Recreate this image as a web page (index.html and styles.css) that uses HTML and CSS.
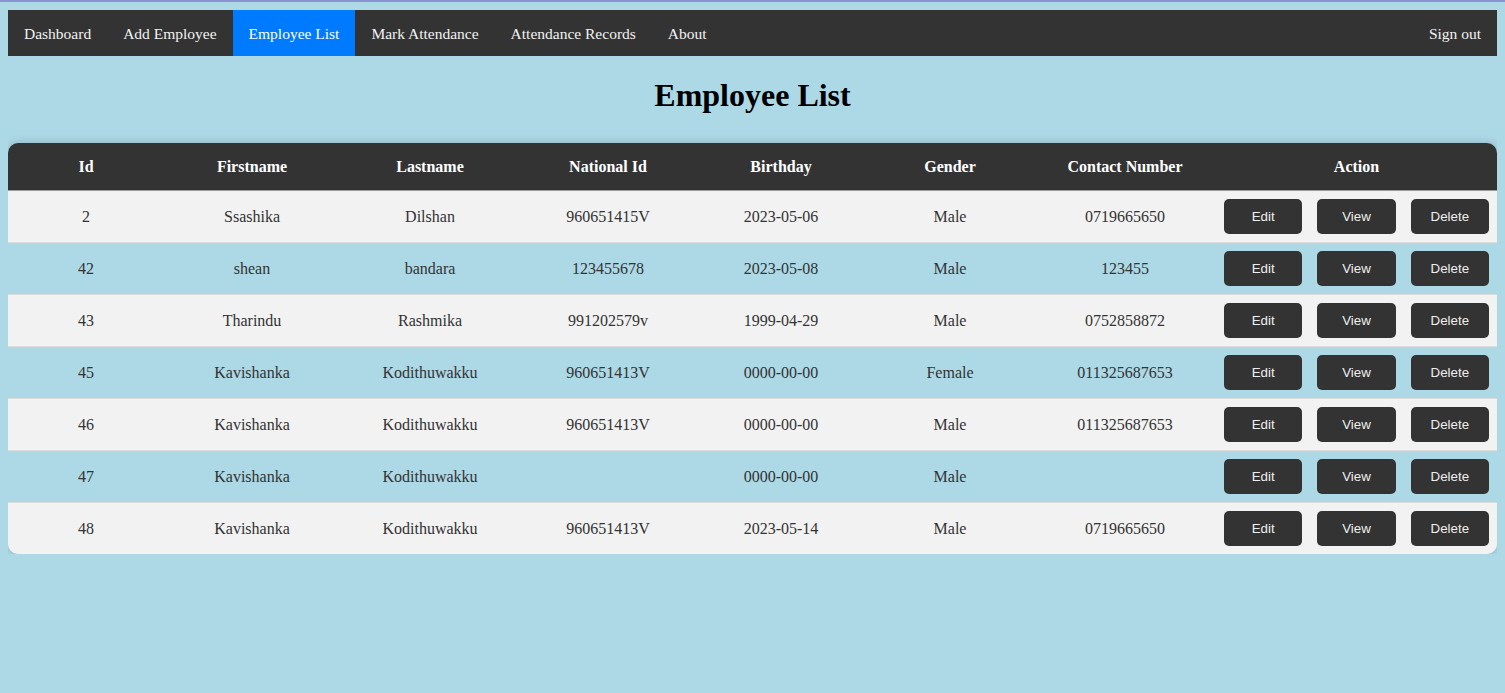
FILE: index.html
```html
<!DOCTYPE html>
<html lang="en">
<head>
<meta charset="utf-8">
<title>Employee List</title>
<link rel="stylesheet" href="styles.css">
</head>
<body>
<nav class="topnav">
  <a href="#" class="nav-link">Dashboard</a>
  <a href="#" class="nav-link">Add Employee</a>
  <a href="#" class="nav-link active">Employee List</a>
  <a href="#" class="nav-link">Mark Attendance</a>
  <a href="#" class="nav-link">Attendance Records</a>
  <a href="#" class="nav-link">About</a>
  <a href="#" class="nav-link signout">Sign out</a>
</nav>
<h1 class="page-title">Employee List</h1>
<div class="table-wrap">
<table class="emp-table">
  <colgroup>
    <col class="c-id"><col class="c-first"><col class="c-last"><col class="c-nic"><col class="c-bday"><col class="c-gender"><col class="c-contact"><col class="c-action">
  </colgroup>
  <thead>
    <tr><th>Id</th><th>Firstname</th><th>Lastname</th><th>National Id</th><th>Birthday</th><th>Gender</th><th>Contact Number</th><th>Action</th></tr>
  </thead>
  <tbody>
    <tr><td>2</td><td>Ssashika</td><td>Dilshan</td><td>960651415V</td><td>2023-05-06</td><td>Male</td><td>0719665650</td><td><div class="actions"><button class="btn">Edit</button><button class="btn">View</button><button class="btn">Delete</button></div></td></tr>
    <tr><td>42</td><td>shean</td><td>bandara</td><td>123455678</td><td>2023-05-08</td><td>Male</td><td>123455</td><td><div class="actions"><button class="btn">Edit</button><button class="btn">View</button><button class="btn">Delete</button></div></td></tr>
    <tr><td>43</td><td>Tharindu</td><td>Rashmika</td><td>991202579v</td><td>1999-04-29</td><td>Male</td><td>0752858872</td><td><div class="actions"><button class="btn">Edit</button><button class="btn">View</button><button class="btn">Delete</button></div></td></tr>
    <tr><td>45</td><td>Kavishanka</td><td>Kodithuwakku</td><td>960651413V</td><td>0000-00-00</td><td>Female</td><td>011325687653</td><td><div class="actions"><button class="btn">Edit</button><button class="btn">View</button><button class="btn">Delete</button></div></td></tr>
    <tr><td>46</td><td>Kavishanka</td><td>Kodithuwakku</td><td>960651413V</td><td>0000-00-00</td><td>Male</td><td>011325687653</td><td><div class="actions"><button class="btn">Edit</button><button class="btn">View</button><button class="btn">Delete</button></div></td></tr>
    <tr><td>47</td><td>Kavishanka</td><td>Kodithuwakku</td><td></td><td>0000-00-00</td><td>Male</td><td></td><td><div class="actions"><button class="btn">Edit</button><button class="btn">View</button><button class="btn">Delete</button></div></td></tr>
    <tr><td>48</td><td>Kavishanka</td><td>Kodithuwakku</td><td>960651413V</td><td>2023-05-14</td><td>Male</td><td>0719665650</td><td><div class="actions"><button class="btn">Edit</button><button class="btn">View</button><button class="btn">Delete</button></div></td></tr>
  </tbody>
</table>
</div>
</body>
</html>
```
FILE: styles.css
```css
html {
  border-top: 2px solid #8a93d2;
  background: #add8e6;
  min-height: 100%;
}
body {
  margin: 8px;
  font-family: "Liberation Serif", "Times New Roman", serif;
  background: #add8e6;
  color: #000;
}
.topnav {
  display: flex;
  background: #333;
}
.nav-link {
  display: block;
  padding: 15px 16px 13px;
  font-size: 15.5px;
  line-height: 18px;
  color: #f2f2f2;
  text-decoration: none;
}
.nav-link.active {
  background: #007bff;
  color: #fff;
}
.nav-link.signout {
  margin-left: auto;
}
.page-title {
  margin: 21px 0 0;
  font-size: 32px;
  line-height: 37px;
  text-align: center;
  color: #000;
}
.table-wrap {
  margin-top: 29px;
  border-radius: 10px;
  overflow: hidden;
  box-shadow: 0 0 10px rgba(0, 0, 0, 0.18);
}
.emp-table {
  width: 100%;
  table-layout: fixed;
  border-collapse: collapse;
  font-size: 16px;
}
.c-id { width: 156px; }
.c-first { width: 176px; }
.c-last { width: 180px; }
.c-nic { width: 176px; }
.c-bday { width: 170px; }
.c-gender { width: 168px; }
.c-contact { width: 182px; }
.c-action { width: 281px; }
.emp-table th {
  background: #333;
  color: #fff;
  font-weight: bold;
  padding: 15px 8px 14px;
  line-height: 18px;
  text-align: center;
  border-bottom: 1px solid #9a9a9a;
}
.emp-table td {
  padding: 8px;
  line-height: 18px;
  text-align: center;
  color: #333;
  border-bottom: 1px solid #dcdcdc;
}
.emp-table tbody tr:nth-child(odd) td {
  background: #f2f2f2;
}
.emp-table tbody tr:nth-child(even) td {
  background: #add8e6;
}
.emp-table tbody tr:last-child td {
  border-bottom: none;
}
.actions {
  display: flex;
  justify-content: center;
  gap: 15px;
}
.btn {
  width: 79px;
  height: 35px;
  padding: 0;
  border: none;
  border-radius: 5px;
  background: #333;
  color: #eee;
  font-family: "Liberation Sans", Arial, sans-serif;
  font-size: 13.33px;
}
```
